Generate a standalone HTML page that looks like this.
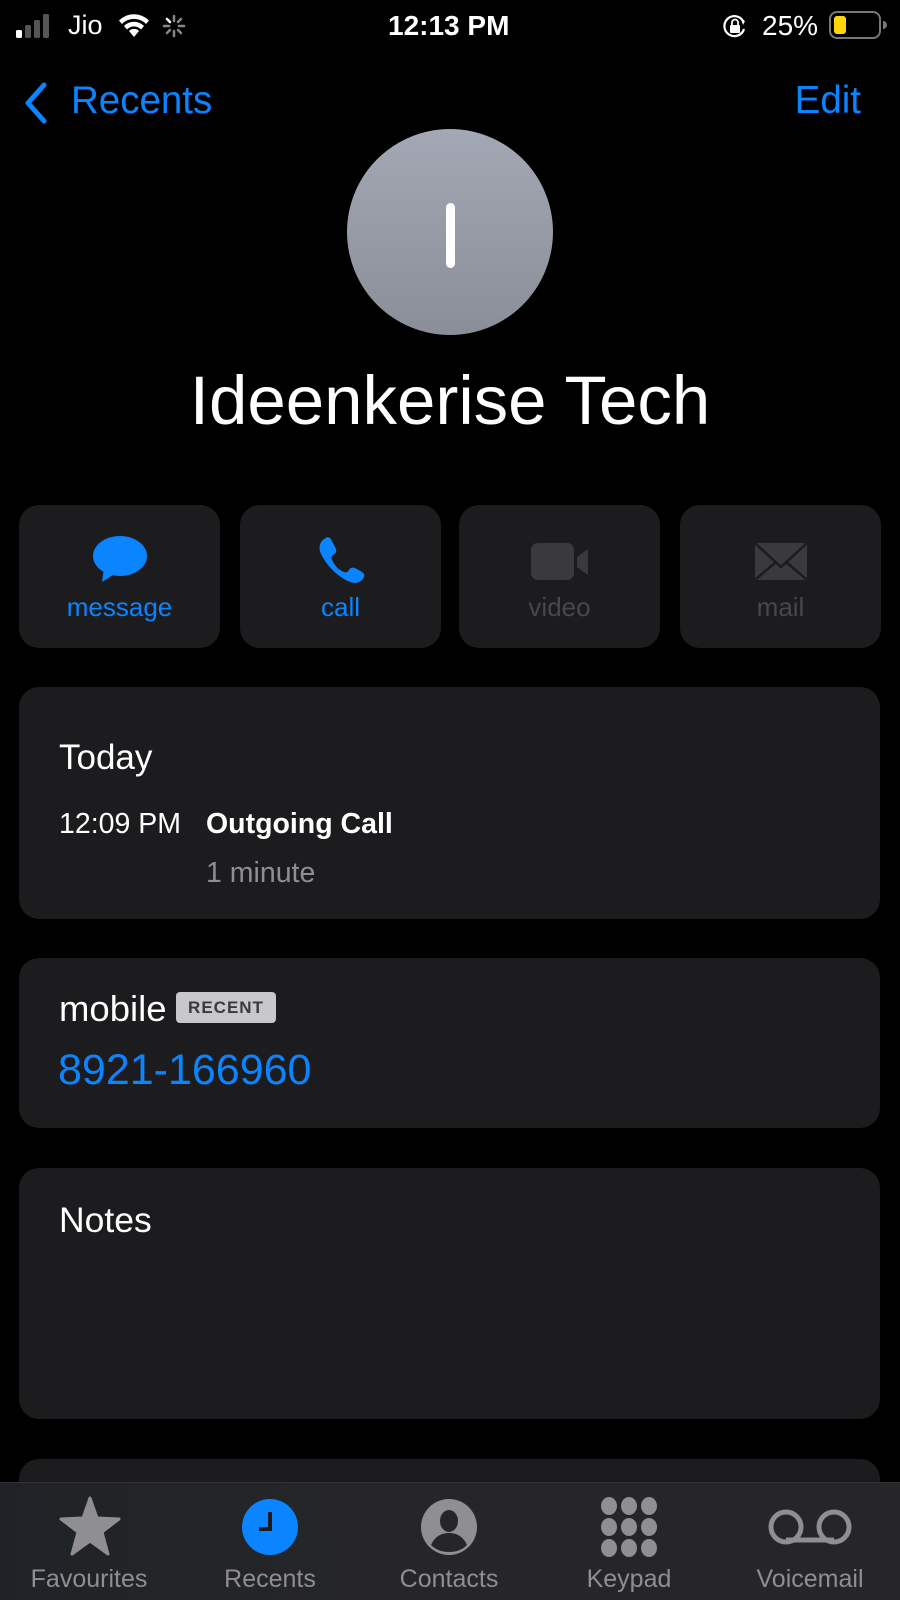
<!DOCTYPE html>
<html><head><meta charset="utf-8"><style>
*{margin:0;padding:0;box-sizing:border-box}
body{width:900px;height:1600px;background:#000;font-family:"Liberation Sans",sans-serif;color:#fff;position:relative;overflow:hidden}
.a{position:absolute;white-space:nowrap}
.card{position:absolute;background:#1c1c1e;border-radius:20px}
.blue{color:#0a84ff}
.btn{position:absolute;top:505px;width:201px;height:143px;background:#1c1c1e;border-radius:20px;text-align:center}
.btn .l{position:absolute;left:0;right:0;top:87px;font-size:26px}
.btn svg{position:absolute;left:50%;transform:translateX(-50%);top:30px}
.tab{position:absolute;top:1565px;font-size:25px;color:#8e8e93;transform:translateX(-50%)}
</style></head><body>
<svg class="a" style="left:16px;top:14px" width="44" height="24"><rect x="0" y="16" width="6" height="8" rx="1.5" fill="#fff"/><rect x="9" y="11" width="6" height="13" rx="1.5" fill="#555"/><rect x="18" y="6" width="6" height="18" rx="1.5" fill="#555"/><rect x="27" y="0" width="6" height="24" rx="1.5" fill="#555"/></svg>
<div class="a" style="left:68px;top:10px;font-size:27px">Jio</div>
<svg class="a" style="left:118px;top:12px" width="32" height="26" viewBox="0 0 32 26"><path d="M16 25 L11 19 A7 7 0 0 1 21 19 Z" fill="#fff"/><path d="M6 14 A14 14 0 0 1 26 14 L23 17.5 A9.5 9.5 0 0 0 9 17.5 Z" fill="#fff"/><path d="M1 8.5 A21 21 0 0 1 31 8.5 L28 12 A16.5 16.5 0 0 0 4 12 Z" fill="#fff"/></svg>
<svg class="a" style="left:162px;top:14px" width="24" height="24" viewBox="0 0 24 24" stroke-width="2.5" stroke-linecap="round"><g stroke="#888"><line x1="12" y1="2" x2="12" y2="7"/><line x1="19" y1="5" x2="16" y2="8"/><line x1="22" y1="12" x2="17" y2="12"/><line x1="19" y1="19" x2="16" y2="16"/><line x1="12" y1="22" x2="12" y2="17"/><line x1="5" y1="19" x2="8" y2="16"/><line x1="2" y1="12" x2="7" y2="12"/></g><line x1="5" y1="5" x2="8" y2="8" stroke="#fff"/></svg>
<div class="a" style="left:388px;top:10px;font-size:28px;font-weight:bold">12:13 PM</div>
<svg class="a" style="left:722px;top:13px" width="26" height="26" viewBox="0 0 26 26"><path d="M21 8 A10 10 0 1 0 22 16" fill="none" stroke="#fff" stroke-width="2.2"/><path d="M19 6 L23 8 L21 12Z" fill="#fff"/><rect x="8" y="12" width="10" height="8" rx="1" fill="#fff"/><path d="M10 12 V9.5 A3 3 0 0 1 16 9.5 V12" fill="none" stroke="#fff" stroke-width="1.8"/></svg>
<div class="a" style="left:762px;top:10px;font-size:28px">25%</div>
<svg class="a" style="left:829px;top:11px" width="58" height="28" viewBox="0 0 58 28"><rect x="1" y="1" width="50" height="26" rx="7" fill="none" stroke="#777" stroke-width="2"/><rect x="5" y="5" width="12" height="18" rx="3" fill="#ffd60a"/><path d="M54 10 A4 4 0 0 1 54 18Z" fill="#777"/></svg>
<svg class="a" style="left:22px;top:81px" width="28" height="44" viewBox="0 0 28 44"><path d="M22 4 L6 22 L22 40" fill="none" stroke="#0a84ff" stroke-width="5" stroke-linecap="round" stroke-linejoin="round"/></svg>
<div class="a blue" style="left:71px;top:79px;font-size:38.5px">Recents</div>
<div class="a blue" style="right:39px;top:79px;font-size:38.5px">Edit</div>
<div class="a" style="left:347px;top:129px;width:206px;height:206px;border-radius:50%;background:linear-gradient(#a3a8b4,#8a8e98)"></div>
<div class="a" style="left:446px;top:203px;width:9px;height:65px;border-radius:5px;background:#fff"></div>
<div class="a" style="left:0;width:900px;text-align:center;top:361px;font-size:69px">Ideenkerise Tech</div>
<div class="btn" style="left:19px"><svg width="56" height="50" viewBox="0 0 56 50"><ellipse cx="28" cy="21" rx="27" ry="20" fill="#0a84ff"/><path d="M12 33 L10 47 L24 38Z" fill="#0a84ff"/></svg><div class="l blue">message</div></div>
<div class="btn" style="left:240px"><svg width="50" height="50" viewBox="0 0 50 50"><path d="M8 4 C12 1 14 2 16 6 L20 14 C21 17 19 19 17 20 C15 21 15 23 17 27 C20 32 23 35 28 37 C30 38 32 37 33 35 C34 33 36 32 39 33 L46 37 C49 39 49 42 46 45 C42 49 36 49 28 44 C18 38 10 29 5 19 C2 12 4 7 8 4Z" fill="#0a84ff"/></svg><div class="l blue">call</div></div>
<div class="btn" style="left:459px"><svg width="60" height="50" viewBox="0 0 60 50"><rect x="1" y="8" width="43" height="37" rx="7" fill="#3a3a3c"/><path d="M47 22 L58 14 V40 L47 32Z" fill="#3a3a3c"/></svg><div class="l" style="color:#48484a">video</div></div>
<div class="btn" style="left:680px"><svg width="54" height="50" viewBox="0 0 54 50"><rect x="1" y="8" width="52" height="37" rx="3" fill="#3a3a3c"/><path d="M2 9 L27 32 L52 9 M2 44 L22 27 M52 44 L32 27" fill="none" stroke="#1c1c1e" stroke-width="2.5"/></svg><div class="l" style="color:#48484a">mail</div></div>
<div class="card" style="left:19px;top:687px;width:861px;height:232px"></div>
<div class="a" style="left:59px;top:738px;font-size:35px">Today</div>
<div class="a" style="left:59px;top:808px;font-size:28.5px">12:09 PM</div>
<div class="a" style="left:206px;top:808px;font-size:28.5px;font-weight:bold">Outgoing Call</div>
<div class="a" style="left:206px;top:857px;font-size:28.5px;color:#8e8e93">1 minute</div>
<div class="card" style="left:19px;top:958px;width:861px;height:170px"></div>
<div class="a" style="left:59px;top:988px;font-size:36.5px">mobile</div>
<div class="a" style="left:176px;top:992px;width:100px;height:31px;background:#c7c7cc;border-radius:4px;color:#3a3a3c;font-size:17px;font-weight:bold;text-align:center;line-height:31px;letter-spacing:1px">RECENT</div>
<div class="a blue" style="left:58px;top:1046px;font-size:43px">8921-166960</div>
<div class="card" style="left:19px;top:1168px;width:861px;height:251px"></div>
<div class="a" style="left:59px;top:1200px;font-size:35.5px">Notes</div>
<div class="card" style="left:19px;top:1459px;width:861px;height:100px"></div>
<div class="a" style="left:0;top:1482px;width:900px;height:118px;background:linear-gradient(90deg,#1f2327,#262628 40%,#262628);border-top:1px solid #333"></div>
<svg class="a" style="left:59px;top:1496px" width="62" height="62" viewBox="0 0 62 62"><path d="M31 2 L38 22 L60 23 L43 36 L49 58 L31 45 L13 58 L19 36 L2 23 L24 22Z" fill="#8e8e93" stroke="#8e8e93" stroke-width="3" stroke-linejoin="round"/></svg>
<svg class="a" style="left:242px;top:1499px" width="56" height="56" viewBox="0 0 56 56"><circle cx="28" cy="28" r="28" fill="#0a84ff"/><path d="M28 13 V30 H17" fill="none" stroke="#1c1c1e" stroke-width="4"/></svg>
<svg class="a" style="left:421px;top:1499px" width="56" height="56" viewBox="0 0 56 56"><circle cx="28" cy="28" r="28" fill="#8e8e93"/><ellipse cx="28" cy="22" rx="9" ry="11" fill="#262628"/><path d="M10 46 C14 37 21 34 28 34 C35 34 42 37 46 46 C41 51 35 53 28 53 C21 53 15 51 10 46Z" fill="#262628"/></svg>
<svg class="a" style="left:600px;top:1497px" width="58" height="60" viewBox="0 0 58 60"><g fill="#8e8e93"><ellipse cx="9" cy="9" rx="8" ry="9"/><ellipse cx="29" cy="9" rx="8" ry="9"/><ellipse cx="49" cy="9" rx="8" ry="9"/><ellipse cx="9" cy="30" rx="8" ry="9"/><ellipse cx="29" cy="30" rx="8" ry="9"/><ellipse cx="49" cy="30" rx="8" ry="9"/><ellipse cx="9" cy="51" rx="8" ry="9"/><ellipse cx="29" cy="51" rx="8" ry="9"/><ellipse cx="49" cy="51" rx="8" ry="9"/></g></svg>
<svg class="a" style="left:768px;top:1509px" width="84" height="36" viewBox="0 0 84 36"><circle cx="18" cy="18" r="15" fill="none" stroke="#8e8e93" stroke-width="5"/><circle cx="66" cy="18" r="15" fill="none" stroke="#8e8e93" stroke-width="5"/><line x1="18" y1="31" x2="66" y2="31" stroke="#8e8e93" stroke-width="5"/></svg>
<div class="tab" style="left:89px">Favourites</div>
<div class="tab blue" style="left:270px">Recents</div>
<div class="tab" style="left:449px">Contacts</div>
<div class="tab" style="left:629px">Keypad</div>
<div class="tab" style="left:810px">Voicemail</div>
</body></html>
